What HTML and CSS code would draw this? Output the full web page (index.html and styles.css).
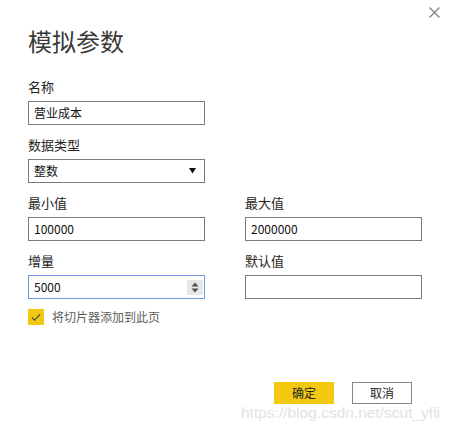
FILE: index.html
```html
<!DOCTYPE html>
<html lang="zh-CN">
<head>
<meta charset="utf-8">
<title>模拟参数</title>
<link rel="stylesheet" href="styles.css">
</head>
<body>
<div class="dialog">
  <button class="close" aria-label="关闭">
    <svg width="11" height="11" viewBox="0 0 11 11"><path d="M0.5 0.5 L10.5 10.5 M10.5 0.5 L0.5 10.5" stroke="#7a7a7a" stroke-width="1.1" fill="none"/></svg>
  </button>
  <h1 class="title">模拟参数</h1>

  <div class="field">
    <div class="label">名称</div>
    <div class="input"><span class="value">营业成本</span></div>
  </div>

  <div class="field">
    <div class="label">数据类型</div>
    <div class="input select">
      <span class="value">整数</span>
      <svg class="caret" width="7" height="6" viewBox="0 0 7 6"><path d="M0 0 H7 L3.5 5.5 Z" fill="#111"/></svg>
    </div>
  </div>

  <div class="grid">
    <div class="field">
      <div class="label">最小值</div>
      <div class="input"><span class="value">100000</span></div>
    </div>
    <div class="field">
      <div class="label">最大值</div>
      <div class="input"><span class="value">2000000</span></div>
    </div>
    <div class="field">
      <div class="label">增量</div>
      <div class="input focused">
        <span class="value">5000</span>
        <span class="spinner">
          <svg width="16" height="15" viewBox="0 0 16 15"><path d="M8 2.5 L11.5 6.5 H4.5 Z M4.5 8.5 H11.5 L8 12.5 Z" fill="#505050"/></svg>
        </span>
      </div>
    </div>
    <div class="field">
      <div class="label">默认值</div>
      <div class="input"><span class="value"></span></div>
    </div>
  </div>

  <label class="check-row">
    <span class="checkbox">
      <svg width="16" height="16" viewBox="0 0 16 16"><path d="M3.8 8.6 L6.6 11.2 L12.2 5.2" stroke="#5a5636" stroke-width="1.3" fill="none"/></svg>
    </span>
    <span class="check-label">将切片器添加到此页</span>
  </label>

  <div class="footer">
    <button class="btn primary">确定</button>
    <button class="btn">取消</button>
  </div>

  <div class="watermark">https://blog.csdn.net/scut_yfli</div>
</div>
</body>
</html>
```

FILE: styles.css
```css
* { box-sizing: border-box; }

html, body {
  margin: 0;
  padding: 0;
  background: #ffffff;
}

body {
  font-family: "Noto Sans CJK SC", "Noto Sans", sans-serif;
  color: #252423;
}

.dialog {
  position: relative;
  width: 450px;
  height: 432px;
  padding: 26px 28px 0 28px;
}

.close {
  position: absolute;
  top: 7px;
  left: 429px;
  width: 11px;
  height: 11px;
  padding: 0;
  border: 0;
  background: none;
  display: block;
}
.close svg { display: block; }

.title {
  margin: 0 0 22px 0;
  font-size: 24px;
  line-height: 30px;
  font-weight: 400;
  color: #3a3938;
}

.field {
  display: flex;
  flex-direction: column;
  gap: 5px;
  width: 177px;
  margin-bottom: 11px;
}

.label {
  font-size: 13px;
  line-height: 18px;
  color: #252423;
}

.input {
  display: flex;
  align-items: center;
  height: 24px;
  border: 1px solid #7a7a7a;
  padding: 0 1px 0 5px;
  background: #fff;
}

.value {
  flex: 1;
  font-size: 12px;
  line-height: 16px;
  color: #111;
}

.select { padding-right: 8px; }
.caret { display: block; }

.focused { border-color: #6f9ae0; }

.spinner {
  display: block;
  width: 16px;
  height: 15px;
  margin-right: 0;
  background: #e6e6e6;
}
.spinner svg { display: block; }

.grid {
  display: grid;
  grid-template-columns: 177px 177px;
  column-gap: 40px;
}

.check-row {
  display: flex;
  align-items: center;
  gap: 8px;
  margin-top: -1px;
  height: 16px;
}

.checkbox {
  width: 16px;
  height: 16px;
  background: #f2c811;
  display: block;
}
.checkbox svg { display: block; }

.check-label {
  font-size: 12px;
  line-height: 16px;
  color: #605e5c;
}

.footer {
  display: flex;
  justify-content: flex-end;
  gap: 18px;
  margin-top: 57px;
  padding-right: 10px;
}

.btn {
  width: 60px;
  height: 22px;
  padding: 0;
  font-family: "Noto Sans CJK SC", "Noto Sans", sans-serif;
  font-size: 12px;
  line-height: 20px;
  color: #252423;
  background: #fff;
  border: 1px solid #8a8886;
}

.btn.primary {
  background: #f2c811;
  border-color: #f2c811;
}

.watermark {
  position: absolute;
  left: 241px;
  top: 403px;
  font-family: "Liberation Sans", Arial, sans-serif;
  font-size: 15.5px;
  line-height: 20px;
  color: #e2e2e2;
  white-space: nowrap;
}
```
